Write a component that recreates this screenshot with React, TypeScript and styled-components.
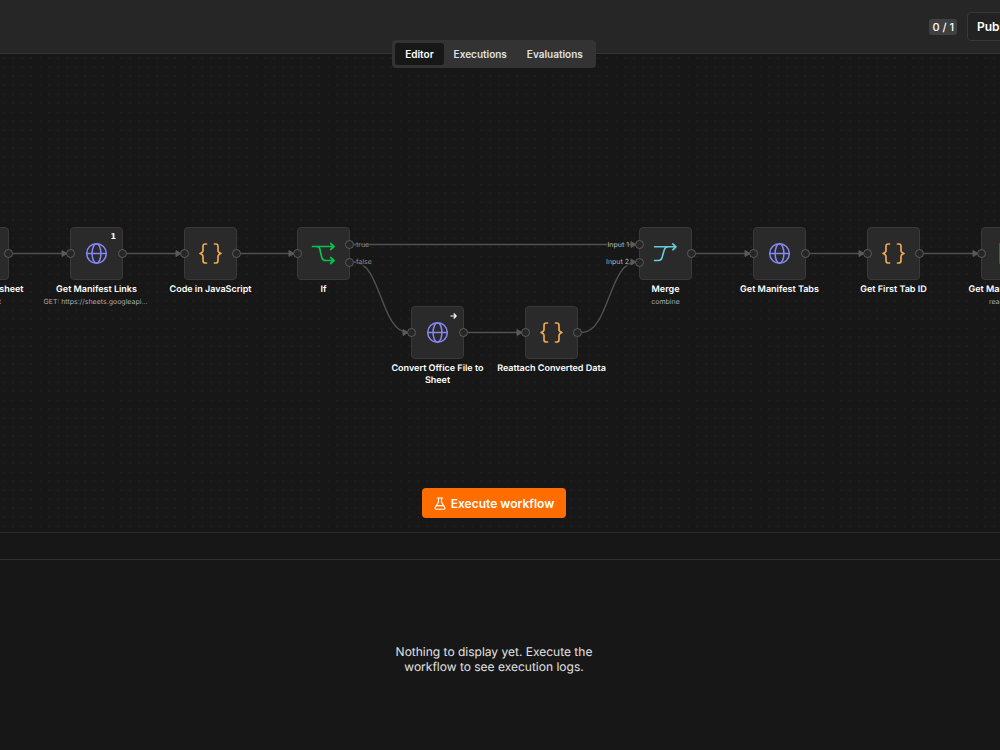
import React from 'react';
import styled, { createGlobalStyle } from 'styled-components';

const GlobalStyle = createGlobalStyle`
  *, *::before, *::after { box-sizing: border-box; }
  html, body, #root { height: 100%; }
  body {
    margin: 0;
    background: #171717;
    color: #ffffff;
    font-family: Inter, "Liberation Sans", sans-serif;
    text-rendering: geometricPrecision;
    overflow: hidden;
  }
  button { font: inherit; color: inherit; margin: 0; cursor: pointer; }
`;

const Page = styled.div`
  display: flex;
  flex-direction: column;
  height: 100%;
  overflow: hidden;
`;

const Header = styled.header`
  position: relative;
  display: flex;
  flex: none;
  align-items: center;
  justify-content: flex-end;
  gap: 10px;
  height: 54px;
  margin-right: -36px;
  background: #262626;
  border-bottom: 1px solid #333333;
`;

const RunCount = styled.span`
  padding: 0 3px;
  border-radius: 3px;
  background: #404040;
  font-size: 11px;
  font-weight: 500;
  line-height: 16px;
`;

const PublishButton = styled.button`
  width: 69px;
  height: 29px;
  padding: 0 9px;
  border: 1px solid #383838;
  border-radius: 4px;
  background: #222222;
  font-size: 12px;
  font-weight: 600;
  text-align: left;
`;

const TabBar = styled.nav`
  position: absolute;
  z-index: 2;
  top: 40px;
  left: 0;
  right: 48px;
  display: flex;
  justify-content: center;
`;

const TabGroup = styled.div`
  display: flex;
  padding: 3px;
  border-radius: 4px;
  background: #333333;
`;

const Tab = styled.button<{ $active?: boolean }>`
  height: 22px;
  padding: 0 10px;
  border: 0;
  border-radius: 3px;
  background: ${(p) => (p.$active ? '#171717' : 'transparent')};
  color: ${(p) => (p.$active ? '#ffffff' : '#e0e0e0')};
  font-size: 10px;
  font-weight: 600;
`;

const Canvas = styled.main`
  position: relative;
  display: flex;
  flex-direction: column;
  justify-content: flex-end;
  align-items: center;
  flex: 1;
  padding: 0 12px 14px 0;
  background-color: #171717;
  background-image: radial-gradient(circle, #1e1e1e 1px, transparent 1px);
  background-size: 9px 9px;
  overflow: hidden;
`;

const Edges = styled.svg`
  position: absolute;
  top: 0;
  left: 0;
  width: 100%;
  height: 100%;
`;

const NodeBox = styled.div<{ $x: number; $y: number }>`
  position: absolute;
  left: ${(p) => p.$x}px;
  top: ${(p) => p.$y}px;
  display: flex;
  align-items: center;
  justify-content: center;
  width: 53px;
  height: 53px;
  border: 1px solid #393939;
  border-radius: 4px;
  background: #2a2a2a;
`;

const Handle = styled.span<{ $side: 'left' | 'right'; $y: number }>`
  position: absolute;
  ${(p) => p.$side}: -5px;
  top: ${(p) => p.$y}px;
  width: 9px;
  height: 9px;
  border: 1px solid #5c5c5c;
  border-radius: 50%;
  background: #262626;
`;

const PortLabel = styled.span<{ $side: 'left' | 'right'; $y: number }>`
  position: absolute;
  ${(p) => (p.$side === 'right' ? 'left: 58px' : 'right: 62px')};
  top: ${(p) => p.$y}px;
  color: ${(p) => (p.$side === 'right' ? '#8c8c8c' : '#b4b4b4')};
  background: #17171799;
  font-size: 7px;
  line-height: 9px;
  white-space: nowrap;
`;

const Corner = styled.span`
  position: absolute;
  top: 5px;
  right: 6px;
  display: flex;
  font: bold 8px/8px "DejaVu Sans", sans-serif;
`;

const Caption = styled.div`
  position: absolute;
  top: 56px;
  left: 50%;
  width: 112px;
  margin-left: -56px;
  text-align: center;
`;

const Name = styled.div`
  font-size: 9px;
  font-weight: 600;
  line-height: 12px;
`;

const Detail = styled.div`
  overflow: hidden;
  padding: 0 3px;
  color: #a8a8a8;
  font-size: 7px;
  line-height: 12px;
  text-overflow: ellipsis;
  white-space: nowrap;
`;

const ExecuteButton = styled.button`
  position: relative;
  display: flex;
  align-items: center;
  gap: 5px;
  height: 30px;
  padding: 0 12px;
  border: 0;
  border-radius: 4px;
  background: #ff6d00;
  color: #ffffff;
  font-size: 12px;
  font-weight: 600;
`;

const LogsBar = styled.div`
  flex: none;
  height: 28px;
  border-top: 1px solid #2c2c2c;
  border-bottom: 1px solid #303030;
`;

const Logs = styled.section`
  display: flex;
  flex: none;
  align-items: center;
  justify-content: center;
  height: 190px;
  padding: 8px 12px 0 0;
`;

const EmptyText = styled.p`
  width: 204px;
  margin: 0;
  color: #e2e2e2;
  font-size: 12px;
  line-height: 15px;
  text-align: center;
`;

const Globe = () => (
  <svg width="23" height="23" viewBox="0 0 23 23" fill="none" stroke="#8587f5" strokeWidth="1.5">
    <circle cx="11.5" cy="11.5" r="9.8" />
    <ellipse cx="11.5" cy="11.5" rx="4.4" ry="9.8" />
    <path d="M1.7 11.5h19.6" />
  </svg>
);

const Braces = () => (
  <svg width="25" height="23" viewBox="0 0 25 23" fill="none" stroke="#eba751" strokeWidth="1.7" strokeLinecap="round" strokeLinejoin="round">
    <path d="M8.5 2H7.3Q5 2 5 4.3V8.4Q5 10.5 2 11.5Q5 12.5 5 14.6V18.7Q5 21 7.3 21H8.5" />
    <path d="M16.5 2H17.7Q20 2 20 4.3V8.4Q20 10.5 23 11.5Q20 12.5 20 14.6V18.7Q20 21 17.7 21H16.5" />
  </svg>
);

const Branch = () => (
  <svg width="25" height="23" viewBox="0 0 25 23" fill="none" stroke="#08c24e" strokeWidth="1.7" strokeLinecap="round" strokeLinejoin="round">
    <path d="M1.5 4.5H23M19.7 1.5L23 4.5L19.7 7.5" />
    <path d="M6 4.5Q8.2 4.5 8.8 7L10.7 15.2Q11.7 18.5 14.5 18.5H23M19.7 15.5L23 18.5L19.7 21.5" />
  </svg>
);

const MergeIcon = () => (
  <svg width="25" height="23" viewBox="0 0 25 23" fill="none" stroke="#68cbdc" strokeWidth="1.6" strokeLinecap="round" strokeLinejoin="round">
    <path d="M1.5 4.8H23M19.8 1.8L23 4.8L19.8 7.8" />
    <path d="M1.5 18.5H5.5Q8.2 18.5 9 15.8L11.2 8Q12 4.8 14.8 4.8" />
  </svg>
);

const SheetIcon = () => (
  <svg width="18" height="23" viewBox="0 0 18 23">
    <path d="M1.5 0.5H12L17.5 6V21Q17.5 22.5 16 22.5H1.5Q0.5 22.5 0.5 21V2Q0.5 0.5 1.5 0.5Z" fill="#28b446" />
    <path d="M12 0.5L17.5 6H12Z" fill="#159939" />
    <path d="M4.5 11.5h9v7h-9zM4.5 15h9M9 11.5v7" fill="none" stroke="#ffffff" />
  </svg>
);

const ArrowIcon = () => (
  <svg width="7" height="8" viewBox="0 0 7 8" fill="none" stroke="#ffffff" strokeWidth="1.2">
    <path d="M0.5 4H6M3.7 1.5L6.2 4L3.7 6.5" />
  </svg>
);

const Flask = () => (
  <svg width="12" height="13" viewBox="0 0 12 13" fill="none" stroke="#ffffff" strokeWidth="1.1" strokeLinecap="round" strokeLinejoin="round">
    <path d="M3.3 1H8.7M4.5 1V5L1.2 10.6Q0.7 12.2 2.2 12.2H9.8Q11.3 12.2 10.8 10.6L7.5 5V1M2.8 8.6H9.2" />
  </svg>
);

const icons = { globe: Globe, braces: Braces, branch: Branch, merge: MergeIcon, sheet: SheetIcon };

interface FlowNode {
  x: number;
  y: number;
  icon: keyof typeof icons;
  name: string;
  detail?: string;
  corner?: React.ReactNode;
  inputs?: string[];
  outputs?: string[];
}

const nodes: FlowNode[] = [
  { x: -44, y: 173, icon: 'sheet', name: 'Get row(s) in sheet', detail: 'read: sheet' },
  { x: 70, y: 173, icon: 'globe', name: 'Get Manifest Links', detail: 'GET: https://sheets.googleapis.com', corner: '1' },
  { x: 184, y: 173, icon: 'braces', name: 'Code in JavaScript' },
  { x: 297, y: 173, icon: 'branch', name: 'If', outputs: ['true', 'false'] },
  { x: 411, y: 252, icon: 'globe', name: 'Convert Office File to Sheet', corner: <ArrowIcon /> },
  { x: 525, y: 252, icon: 'braces', name: 'Reattach Converted Data' },
  { x: 639, y: 173, icon: 'merge', name: 'Merge', detail: 'combine', inputs: ['Input 1', 'Input 2'] },
  { x: 753, y: 173, icon: 'globe', name: 'Get Manifest Tabs' },
  { x: 867, y: 173, icon: 'braces', name: 'Get First Tab ID' },
  { x: 981, y: 173, icon: 'sheet', name: 'Get Manifest Data', detail: 'read: sheet' },
];

const edges = [
  'M13 199.5H66',
  'M127 199.5H180',
  'M241 199.5H294',
  'M354 190.5H636',
  'M354 208C381 208 381 278.5 408 278.5',
  'M468 278.5H522',
  'M582 278.5C609 278.5 609 208 636 208',
  'M696 199.5H750',
  'M810 199.5H863',
  'M924 199.5H977',
];

const arrows = [
  [67, 199.5], [181, 199.5], [294, 199.5], [636, 190.5], [636, 208],
  [408, 278.5], [522, 278.5], [750, 199.5], [864, 199.5], [978, 199.5],
];

function Ports({ side, labels }: { side: 'left' | 'right'; labels?: string[] }) {
  if (!labels) return <Handle $side={side} $y={21} />;
  return (
    <>
      {labels.map((label, i) => (
        <React.Fragment key={label}>
          <Handle $side={side} $y={12 + i * 18} />
          <PortLabel $side={side} $y={12 + i * 17}>{label}</PortLabel>
        </React.Fragment>
      ))}
    </>
  );
}

export default function App() {
  return (
    <Page>
      <GlobalStyle />
      <Header>
        <RunCount>0 / 1</RunCount>
        <PublishButton>Publish</PublishButton>
        <TabBar>
          <TabGroup>
            <Tab $active>Editor</Tab>
            <Tab>Executions</Tab>
            <Tab>Evaluations</Tab>
          </TabGroup>
        </TabBar>
      </Header>
      <Canvas>
        <Edges aria-hidden="true">
          {edges.map((d) => (
            <path key={d} d={d} fill="none" stroke="#505050" strokeWidth="1.4" />
          ))}
          {arrows.map(([x, y]) => (
            <path key={`${x}-${y}`} d={`M${x} ${y}l-5 -3v6z`} fill="#5a5a5a" stroke="#5a5a5a" />
          ))}
        </Edges>
        {nodes.map((node) => {
          const Icon = icons[node.icon];
          return (
            <NodeBox key={node.name} $x={node.x} $y={node.y}>
              <Icon />
              {node.corner && <Corner>{node.corner}</Corner>}
              <Ports side="left" labels={node.inputs} />
              <Ports side="right" labels={node.outputs} />
              <Caption>
                <Name>{node.name}</Name>
                {node.detail && <Detail>{node.detail}</Detail>}
              </Caption>
            </NodeBox>
          );
        })}
        <ExecuteButton>
          <Flask />
          Execute workflow
        </ExecuteButton>
      </Canvas>
      <LogsBar />
      <Logs>
        <EmptyText>Nothing to display yet. Execute the workflow to see execution logs.</EmptyText>
      </Logs>
    </Page>
  );
}
